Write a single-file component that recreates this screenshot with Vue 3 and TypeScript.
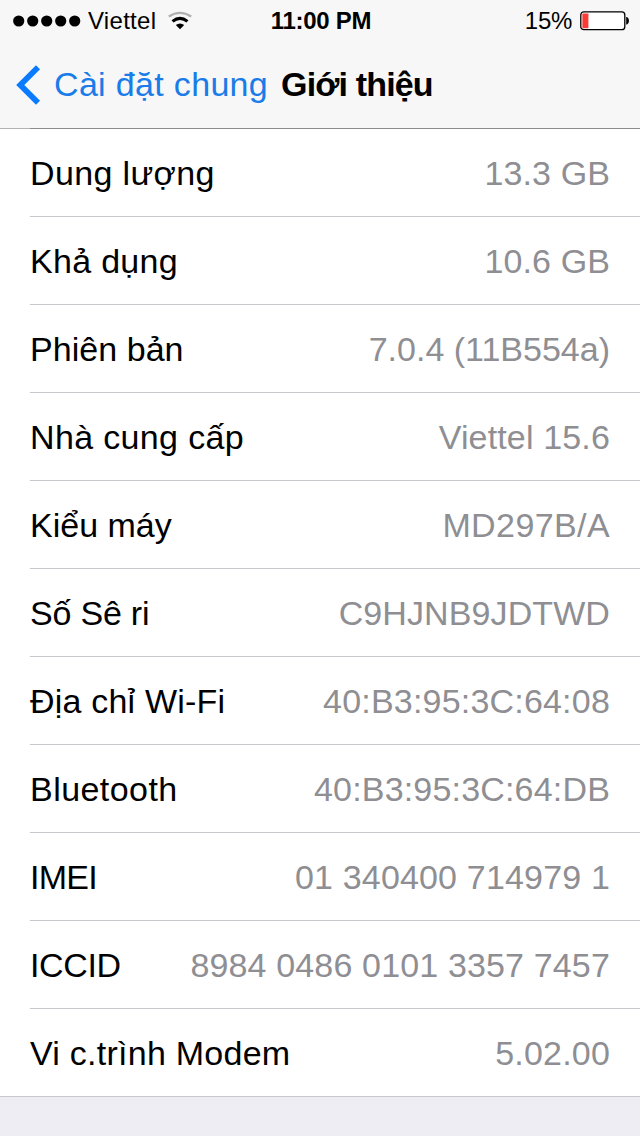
<script setup lang="ts">
interface InfoRow {
  label: string
  value: string
  labelTracking: number
  valueTracking: number
}

const rows: InfoRow[] = [
  { label: 'Dung lượng', value: '13.3 GB', labelTracking: 0.35, valueTracking: 0.1 },
  { label: 'Khả dụng', value: '10.6 GB', labelTracking: 0.3, valueTracking: 0.1 },
  { label: 'Phiên bản', value: '7.0.4 (11B554a)', labelTracking: 0.05, valueTracking: 0 },
  { label: 'Nhà cung cấp', value: 'Viettel 15.6', labelTracking: 0.35, valueTracking: 0.15 },
  { label: 'Kiểu máy', value: 'MD297B/A', labelTracking: 0, valueTracking: 0.4 },
  { label: 'Số Sê ri', value: 'C9HJNB9JDTWD', labelTracking: -0.2, valueTracking: 0.1 },
  { label: 'Địa chỉ Wi-Fi', value: '40:B3:95:3C:64:08', labelTracking: 0.2, valueTracking: 0.2 },
  { label: 'Bluetooth', value: '40:B3:95:3C:64:DB', labelTracking: 0.45, valueTracking: 0.18 },
  { label: 'IMEI', value: '01 340400 714979 1', labelTracking: -0.7, valueTracking: 0.17 },
  { label: 'ICCID', value: '8984 0486 0101 3357 7457', labelTracking: -0.35, valueTracking: 0.15 },
  { label: 'Vi c.trình Modem', value: '5.02.00', labelTracking: 0.25, valueTracking: 0.2 },
]
</script>

<template>
  <div class="screen">
    <header class="top">
      <div class="status">
        <div class="carrier">
          <svg class="signal" width="68" height="12" viewBox="0 0 68 12">
            <circle v-for="n in 5" :key="n" :cx="n * 14 - 8.3" cy="6" r="5.6" />
          </svg>
          <span class="carrier-name">Viettel</span>
          <svg class="wifi" width="26" height="20" viewBox="0 0 26 20" fill="none">
            <path d="M1.8 5.6Q13 -1.8 24.2 5.6" stroke="#b0b0b0" stroke-width="2.4" />
            <path d="M5.5 10.4Q13 4.4 20.5 10.4" stroke="#000" stroke-width="3" />
            <path d="M8.8 14Q13 10.8 17.2 14L13 18.2Z" fill="#000" />
          </svg>
        </div>
        <span class="clock">11:00 PM</span>
        <div class="power">
          <span class="percent">15%</span>
          <svg class="battery" width="49" height="20" viewBox="0 0 49 20">
            <rect x="0.8" y="0.9" width="44" height="17.8" rx="3" fill="#fff" stroke="#000" stroke-width="1.3" />
            <rect x="2.4" y="2.4" width="6" height="14.8" rx="0.8" fill="#fb3a36" />
            <path d="M46.2 6H47Q49 7 49 9.8T47 13.6H46.2Z" />
          </svg>
        </div>
      </div>
      <nav class="nav">
        <svg class="chevron" width="26" height="42" viewBox="0 0 26 42" fill="none">
          <path d="M23 3.3L5.3 21L23 38.7" stroke="#0a7aff" stroke-width="5.8" />
        </svg>
        <span class="back">Cài đặt chung</span>
        <h1 class="title">Giới thiệu</h1>
      </nav>
    </header>
    <main class="list">
      <div v-for="row in rows" :key="row.label" class="row">
        <span class="label" :style="{ letterSpacing: row.labelTracking + 'px' }">{{ row.label }}</span>
        <span class="value" :style="{ letterSpacing: row.valueTracking + 'px' }">{{ row.value }}</span>
      </div>
    </main>
  </div>
</template>

<style>
body {
  background: #eeedf3;
}
</style>

<style scoped>
.screen {
  width: 640px;
  height: 1136px;
  overflow: hidden;
  background: #eeedf3;
  color: #000;
  font-family: "Liberation Sans", Arial, sans-serif;
  white-space: nowrap;
}
.top {
  height: 129px;
  background:
    linear-gradient(#b2b2b2, #b2b2b2) 0 100% / 30px 1px no-repeat,
    linear-gradient(#8c8c8c, #8c8c8c) 0 100% / 100% 1px no-repeat,
    #f7f7f7;
}
.status {
  display: grid;
  grid-template-columns: 1fr auto 1fr;
  align-items: center;
  box-sizing: border-box;
  height: 41px;
  padding: 1px 11px 0 13px;
}
.carrier,
.power {
  display: flex;
  align-items: center;
}
.power {
  justify-content: flex-end;
}
.carrier-name {
  margin-left: 7px;
  font-size: 24px;
  letter-spacing: 0.3px;
}
.wifi {
  margin-left: 11px;
}
.clock {
  font-size: 24px;
  font-weight: bold;
  letter-spacing: -0.3px;
}
.percent {
  margin-right: 8px;
  font-size: 24px;
  letter-spacing: -0.3px;
}
.nav {
  display: flex;
  align-items: center;
  height: 87px;
}
.chevron {
  margin-left: 15px;
}
.back {
  margin-left: 13px;
  color: #1a7ce8;
  font-size: 34px;
  letter-spacing: 0.33px;
}
.title {
  margin: 0 0 0 13px;
  font-size: 34px;
  letter-spacing: -0.85px;
}
.row {
  display: flex;
  justify-content: space-between;
  align-items: center;
  box-sizing: border-box;
  height: 88px;
  padding: 0 30px;
  background: linear-gradient(#c8c7cc, #c8c7cc) 30px 100% / 100% 1px no-repeat #fff;
  font-size: 34px;
}
.row:last-child {
  background-position: 0 100%;
}
.value {
  color: #8e8e93;
}
</style>
